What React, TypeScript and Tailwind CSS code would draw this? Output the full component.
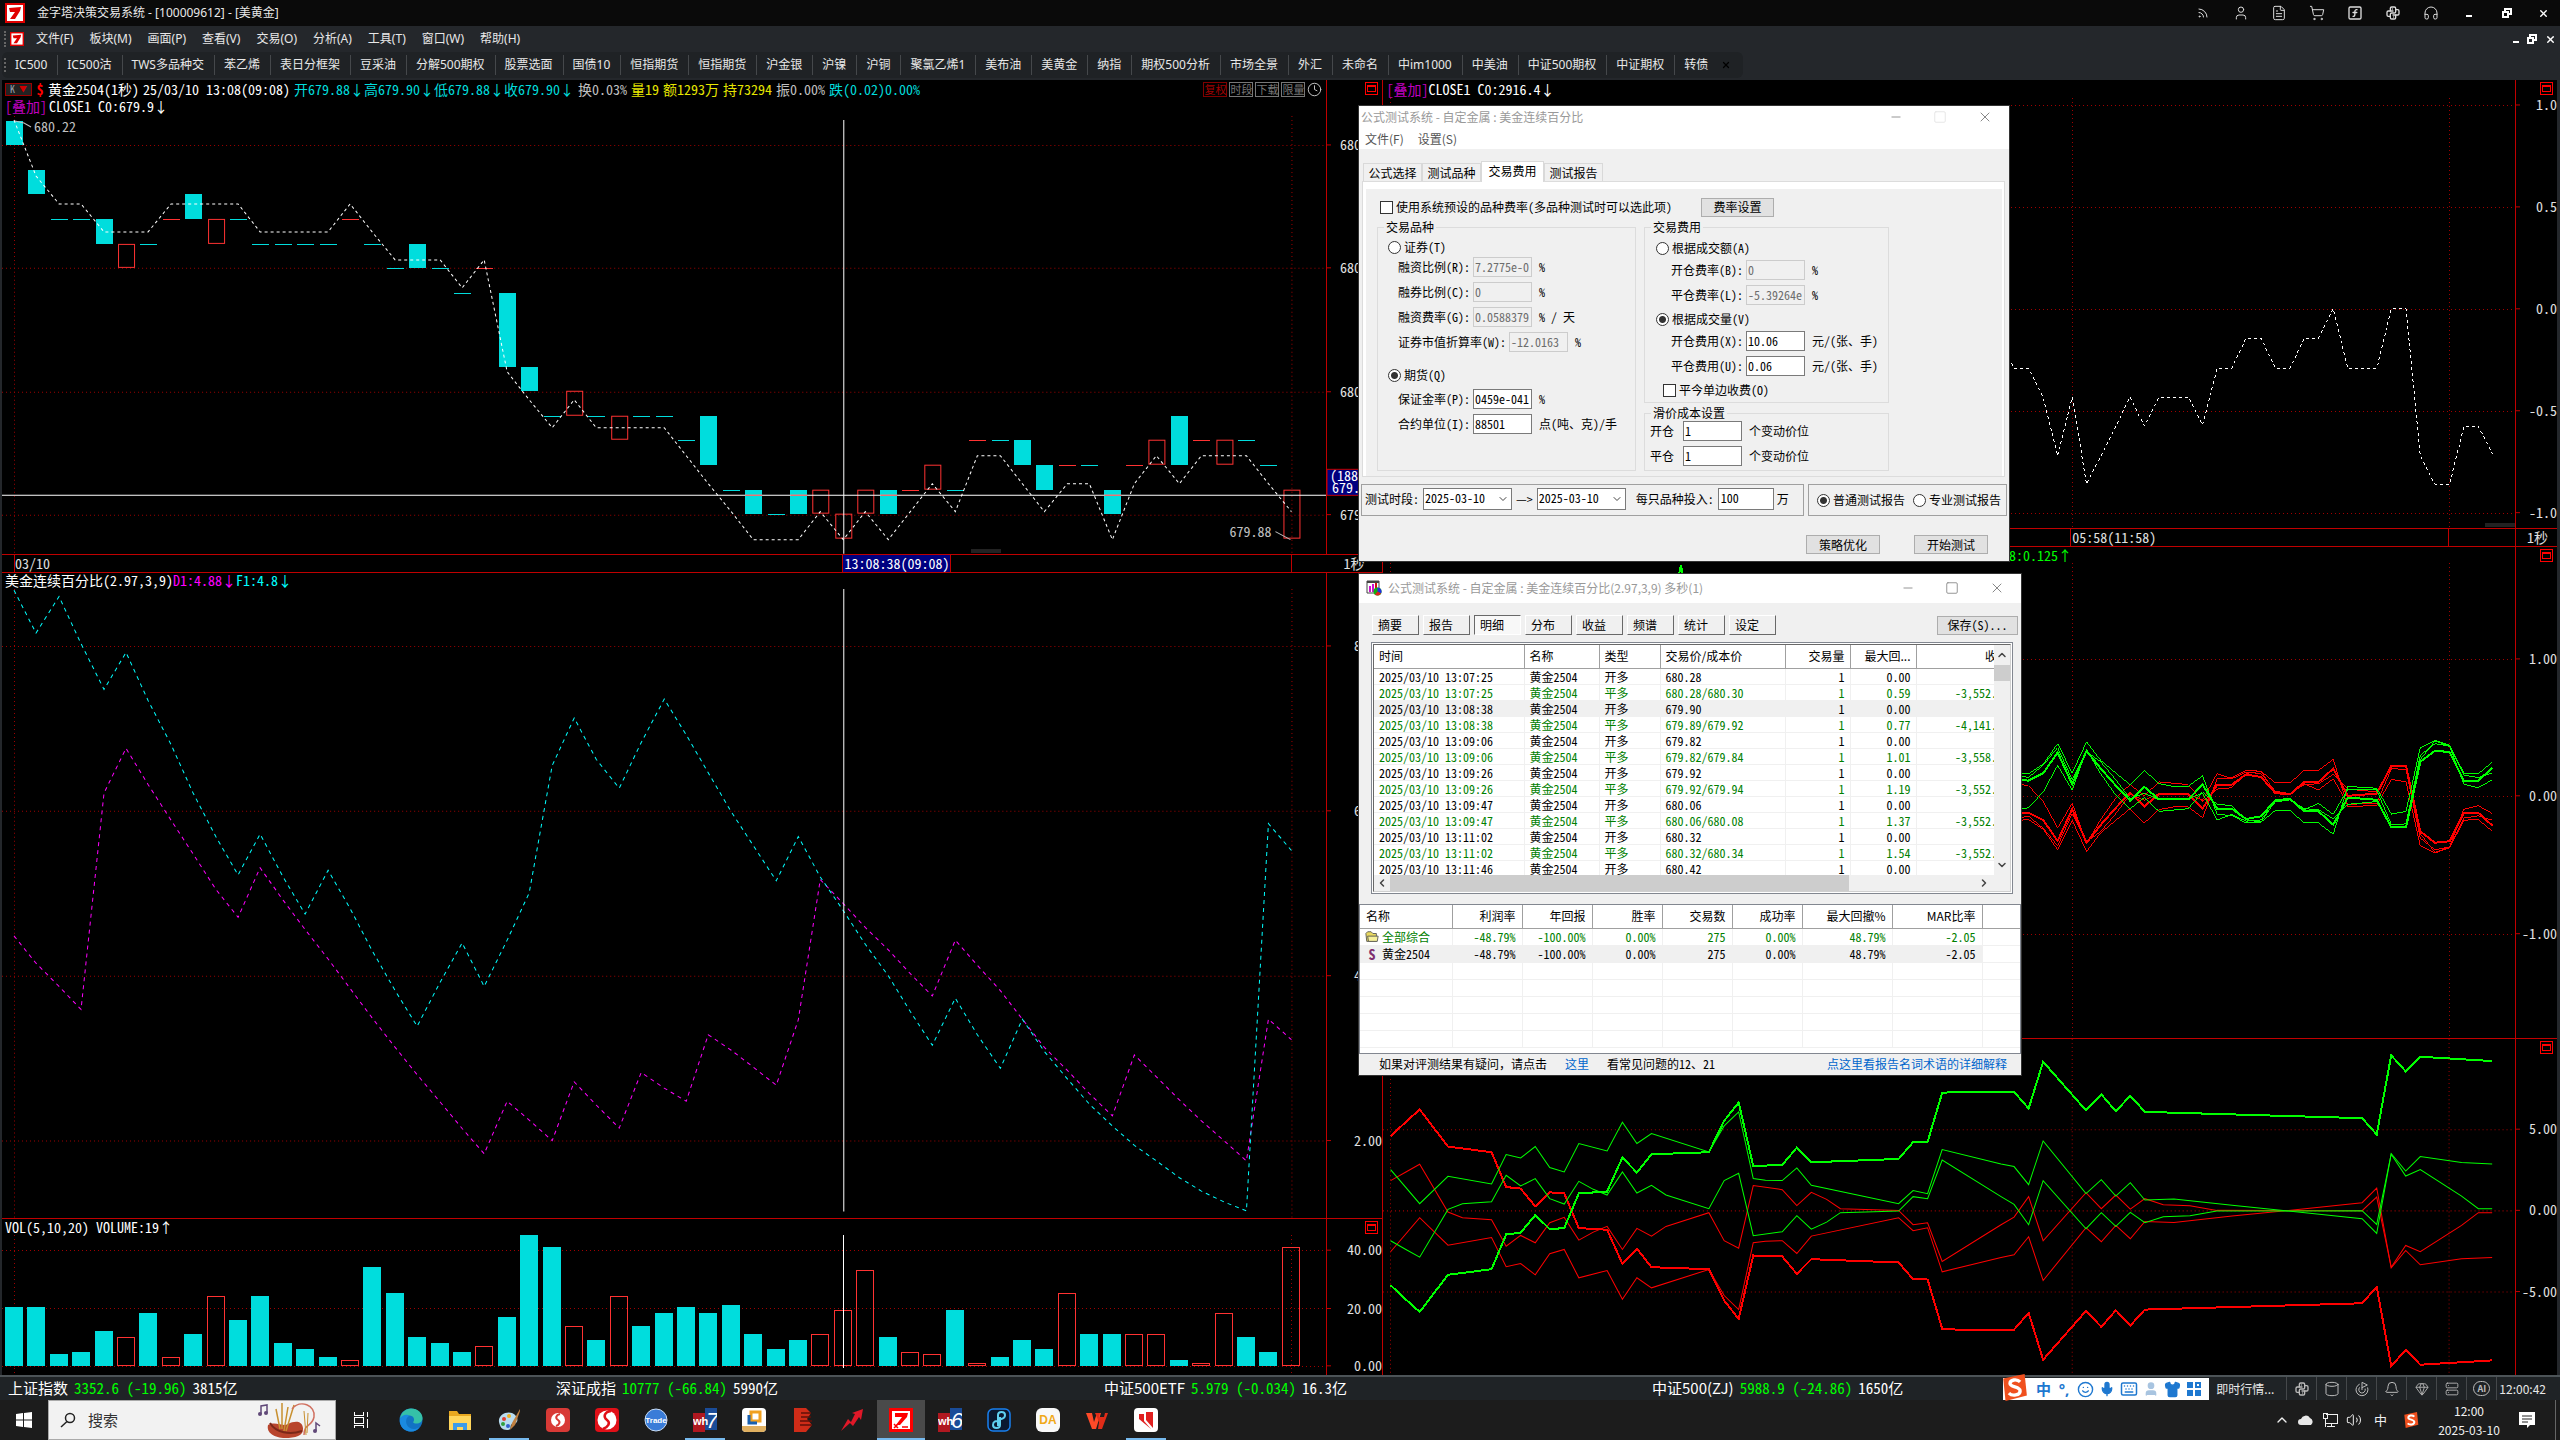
import { useState, type ReactNode } from 'react'
import {
  Bell,
  ChevronDown,
  ChevronLeft,
  ChevronRight,
  ChevronUp,
  Clock,
  Cylinder,
  FileText,
  Gem,
  Goal,
  Headphones,
  Keyboard,
  Mic,
  Minus,
  Rss,
  Server,
  Shirt,
  ShoppingCart,
  Smile,
  Square,
  SquareFunction,
  User,
  Volume2,
  X,
} from 'lucide-react'
import { TbBrandPython } from 'react-icons/tb'
import clsx from 'clsx'

const MONO = "font-['Noto_Sans_Mono_CJK_SC','Noto_Sans_CJK_SC',monospace]"
const UI = "font-['Noto_Sans_CJK_SC',sans-serif]"
const MENU = "font-['Noto_Sans','Noto_Sans_CJK_SC',sans-serif]"

const CYAN = '#00dddd'
const RED = '#ff3232'
const GRID = '#a00000'

/* ---------- data ---------- */

const menus = ['文件(F)', '板块(M)', '画面(P)', '查看(V)', '交易(O)', '分析(A)', '工具(T)', '窗口(W)', '帮助(H)']

const boards = [
  'IC500', 'IC500沽', 'TWS多品种交', '苯乙烯', '表日分框架', '豆采油', '分解500期权', '股票选面', '国债10',
  '恒指期货', '恒指期货', '沪金银', '沪镍', '沪铜', '聚氯乙烯1', '美布油', '美黄金', '纳指', '期权500分析',
  '市场全景', '外汇', '未命名', '中im1000', '中美油', '中证500期权', '中证期权', '转债',
]

// [falling?, top level, bottom level], one level = 0.02
type Candle = [boolean, number, number]
const c = (a: number, b = a): Candle => [true, a, b]
const r = (a: number, b = a): Candle => [false, a, b]
const candles: Candle[] = [
  c(0, 1), c(2, 3), c(4), c(4), c(4, 5), r(5, 6), c(5), r(4), c(3, 4), r(4, 5),
  c(4), c(5), c(5), c(5), c(5), r(4), c(5), c(6), c(5, 6), c(6),
  c(7), r(6), c(7, 10), c(10, 11), c(12), r(11, 12), c(12), r(12, 13), c(12), c(12),
  c(13), c(12, 14), c(15), c(15, 16), c(16), c(15, 16), r(15, 16), r(16, 17), r(15, 16), c(15, 16),
  r(15), r(14, 15), c(15), r(13), c(13), c(13, 14), c(14, 15), r(14), c(14), c(15, 16),
  r(14), r(13, 14), c(12, 14), r(13), r(13, 14), c(13), c(14), r(15, 17),
]

const overlay = [
  0, 2, 3, 3, 4, 4, 4, 3, 3, 3, 3, 4, 4, 4, 4, 3, 4, 5, 5, 5, 6, 5, 9, 10, 11, 10, 11, 11, 11, 11,
  12, 13, 14, 15, 15, 15, 14, 15, 14, 15, 14, 13, 14, 12, 12, 13, 14, 13, 13, 15, 13, 12, 13, 12, 12, 12, 13, 14,
]

const f1 = [
  48, 150, 63, 175, 284, 196, 310, 415, 530, 635, 725, 628, 730, 818, 714, 805, 905, 1000, 1085, 980,
  887, 990, 880, 768, 465, 352, 450, 519, 410, 307, 392, 482, 575, 655, 739, 634, 730, 810, 890, 965,
  1050, 1130, 1018, 1105, 1185, 1068, 1145, 1210, 1270, 1322, 1368, 1405, 1445, 1477, 1503, 1524, 603, 667,
]
const d1 = [
  870, 935, 990, 1045, 530, 424, 510, 595, 675, 760, 826, 708, 785, 855, 925, 995, 1065, 1135, 1200, 1265,
  1328, 1388, 1263, 1308, 1357, 1217, 1272, 1327, 1195, 1232, 1263, 1105, 1142, 1182, 1225, 1070, 736, 793, 850, 903,
  960, 1013, 880, 940, 1000, 1068, 1135, 1190, 1245, 1298, 1153, 1205, 1260, 1310, 1358, 1405, 1068, 1117,
]

// negative = rising bar
const volumes = [
  20, 20, 4, 5, 12, -10, 18, -3, 11, -24, 16, 24, 8, 6, 3, -2, 34, 25, 10, 8,
  5, -7, 17, 45, 41, -14, 9, -24, 14, 18, 20, 18, 21, 11, 6, 9, -11, -19, -33, 10,
  -5, -4, 19, -1, 3, 9, 6, -25, 11, 11, -11, -11, 2, -1, -18, 10, 5, -41,
]

const closeLine =
  '25,130 40,153 80,153 122,220 162,350 203,218 243,413 283,350 325,283 365,218 405,283 446,218 528,218 568,281 609,153 650,153 690,86 732,86 772,153 813,153 853,86 893,86 934,20 975,153 1056,153 1097,20 1138,20 1178,350 1219,414 1260,414 1300,283 1340,283 1380,345'

const band = {
  main: '40,1073 60,1075 80,1077 122,1060 162,1014 203,1085 243,1010 283,1050 325,1088 365,1122 405,1091 446,1119 528,1119 568,1086 609,1140 650,1140 690,1163 732,1157 772,1121 813,1118 853,1146 893,1146 934,1176 975,1115 1056,1120 1097,1182 1138,1182 1178,1035 1219,1010 1260,1013 1300,1077 1340,1077 1380,1048',
  thin: [
    '60,1060 80,1062 122,1040 162,994 203,1060 243,990 283,1032 325,1060 365,1086 405,1054 446,1084 487,1090 528,1090 568,1066 609,1153 650,1155 690,1172 732,1170 772,1144 813,1144 853,1172 893,1172 934,1197 975,1090 1056,1094 1097,1152 1138,1146 1178,1003 1219,987 1260,998 1300,1060 1340,1062 1380,1035',
    '60,1066 80,1070 122,1042 162,1003 203,1075 243,1012 283,1035 325,1075 365,1118 405,1105 446,1120 528,1118 568,1105 609,1165 650,1153 690,1168 732,1165 772,1125 813,1120 853,1142 893,1128 934,1153 975,1096 1056,1098 1097,1176 1138,1174 1178,1020 1219,994 1260,1000 1300,1065 1340,1070 1380,1060',
    '60,1140 80,1138 122,1102 162,1043 203,1098 243,1008 283,1062 325,1110 365,1140 405,1115 446,1146 528,1140 568,1102 609,1130 650,1133 690,1165 732,1170 772,1122 813,1120 853,1140 893,1142 934,1163 975,1130 1056,1124 1097,1182 1138,1182 1178,1030 1219,988 1260,1000 1300,1085 1340,1093 1380,1075',
  ],
}

const spread = {
  main: '40,737 60,780 78,817 115,706 172,689 191,585 210,580 229,527 248,569 267,566 286,462 323,457 343,355 362,400 381,345 456,339 476,245 495,190 514,380 552,377 571,325 590,369 704,359 723,309 742,308 761,161 780,158 855,158 874,208 893,68 949,214 969,166 988,216 1007,170 1026,218 1310,237 1329,286 1348,49 1367,97 1386,53 1480,66',
  thin: [
    '40,391 78,493 115,411 172,434 191,346 210,356 229,322 248,385 267,398 286,313 323,335 343,249 362,313 381,283 456,338 476,260 495,218 514,418 530,423 552,424 571,386 590,438 704,493 723,454 742,463 761,331 838,374 855,382 874,436 893,305 949,463 969,421 988,470 1007,430 1026,482 1064,479 1140,498 1210,514 1310,538 1329,582 1348,343 1367,395 1386,352 1440,370 1480,374',
    '40,604 60,630 78,653 115,510 134,493 172,487 191,408 210,440 229,418 248,478 267,494 286,426 305,450 323,467 343,398 362,461 381,438 400,467 456,508 476,424 495,402 514,589 552,577 571,529 590,569 610,548 628,520 704,515 723,472 742,478 761,362 838,472 855,495 874,556 893,424 949,568 969,520 988,561 1007,519 1026,550 1050,532 1085,529 1120,515 1310,514 1329,555 1348,345 1367,410 1386,391 1440,470 1462,508 1480,508',
  ],
}

const trades = [
  ['13:07:25', '680.28', '0.00', ''],
  ['13:07:25', '680.28/680.30', '0.59', '-3,552.00'],
  ['13:08:38', '679.90', '0.00', ''],
  ['13:08:38', '679.89/679.92', '0.77', '-4,141.00'],
  ['13:09:06', '679.82', '0.00', ''],
  ['13:09:06', '679.82/679.84', '1.01', '-3,558.00'],
  ['13:09:26', '679.92', '0.00', ''],
  ['13:09:26', '679.92/679.94', '1.19', '-3,552.00'],
  ['13:09:47', '680.06', '0.00', ''],
  ['13:09:47', '680.06/680.08', '1.37', '-3,552.00'],
  ['13:11:02', '680.32', '0.00', ''],
  ['13:11:02', '680.32/680.34', '1.54', '-3,552.00'],
  ['13:11:46', '680.42', '0.00', ''],
]

const summaryHead = ['名称', '利润率', '年回报', '胜率', '交易数', '成功率', '最大回撤%', 'MAR比率', '']
const summaryRow = ['-48.79%', '-100.00%', '0.00%', '275', '0.00%', '48.79%', '-2.05', '']

const quotes = [
  ['上证指数', '3352.6 (-19.96)', '3815亿'],
  ['深证成指', '10777 (-66.84)', '5990亿'],
  ['中证500ETF', '5.979 (-0.034)', '16.3亿'],
  ['中证500(ZJ)', '5988.9 (-24.86)', '1650亿'],
]

/* ---------- chart helpers ---------- */

const barX = (i: number) => Math.round(14 + i * 22.4)
const levelY = (n: number) => Math.round(120.5 + n * 24.6)

const series = (ys: number[], toY: (v: number) => number) => ys.map((v, i) => `${barX(i)},${toY(v).toFixed(1)}`).join(' ')

const project = (src: string, toX: (v: number) => number, toY: (v: number) => number) =>
  src
    .split(' ')
    .map((p) => {
      const [x, y] = p.split(',').map(Number)
      return `${toX(x).toFixed(1)},${toY(y).toFixed(1)}`
    })
    .join(' ')

interface PlotProps {
  x: number
  y: number
  w: number
  h: number
  rows: number[]
  cols: number[]
  children?: ReactNode
}

function Plot({ x, y, w, h, rows, cols, children }: PlotProps) {
  return (
    <svg viewBox={`${x} ${y} ${w} ${h}`} preserveAspectRatio="none" className="block min-h-0 w-full flex-1" shapeRendering="crispEdges">
      <g stroke={GRID} strokeDasharray="1 3">
        {rows.map((gy) => (
          <line key={gy} x1={x} x2={x + w} y1={gy + 0.5} y2={gy + 0.5} />
        ))}
        {cols.map((gx) => (
          <line key={gx} x1={gx + 0.5} x2={gx + 0.5} y1={y} y2={y + h} />
        ))}
      </g>
      {children}
    </svg>
  )
}

interface AxisProps {
  top: number
  height: number
  labels: [number, string][]
  narrow?: boolean
  children?: ReactNode
}

function Axis({ top, height, labels, narrow, children }: AxisProps) {
  const pct = (y: number) => `${((y - top) / height) * 100}%`
  return (
    <div className={clsx('relative shrink-0 border-l border-[#c00000]', narrow ? 'w-[42px]' : 'w-14')}>
      <svg className={clsx('absolute inset-0 h-full w-full overflow-visible text-[14px]', MONO)}>
        {labels.map(([y, text]) => (
          <g key={y}>
            <line x1="0" x2="4" y1={pct(y)} y2={pct(y)} stroke="#c00000" />
            <text x="100%" y={pct(y)} dy="5" textAnchor="end" fill="#e0e0e0">
              {text}
            </text>
          </g>
        ))}
        {children}
      </svg>
      <button aria-label="最大化" className="absolute top-[2px] right-1 flex h-[13px] w-[13px] items-center justify-center border border-[#ff0000]">
        <span className="h-[7px] w-[9px] border border-t-2 border-[#ff0000]" />
      </button>
    </div>
  )
}

function TimeRow({ children }: { children: ReactNode }) {
  return <div className={clsx('flex h-[19px] shrink-0 items-stretch border-y border-[#c00000] text-[14px] leading-[17px] text-[#e0e0e0]', MONO)}>{children}</div>
}

/* ---------- charts ---------- */

function CandlePanel() {
  return (
    <div className="flex min-h-0 flex-[474]">
      <div className="flex min-w-0 flex-1 flex-col">
        <div className={clsx('flex h-[18px] items-center gap-1 pl-[3px] text-[14px] leading-[18px] whitespace-nowrap text-white', MONO)}>
          <button className="flex h-[13px] items-center border border-[#a00000] bg-[#222] px-1 text-[10px] text-gray-400">
            K<span className="ml-1 text-[8px] text-[#d00000]">▼</span>
          </button>
          <span className="w-2 text-center font-bold text-[#ff0000]">$</span>
          <span>黄金2504(1秒)</span>
          <span>25/03/10 13:08(09:08)</span>
          <span className="text-[#00dddd]">开679.88↓高679.90↓低679.88↓收679.90↓</span>
          <span className="text-[#c0c0c0]">换0.03%</span>
          <span className="text-[#e6e600]">量19</span>
          <span className="text-[#e6e600]">额1293万</span>
          <span className="text-[#e6e600]">持73294</span>
          <span className="text-[#c0c0c0]">振0.00%</span>
          <span className="text-[#00dddd]">跌(0.02)0.00%</span>
          <div className="mr-1 ml-auto flex items-center gap-[2px] text-[11px] leading-[13px] text-[#777]">
            <button className="h-[15px] w-6 border border-[#800000] text-center text-[#a00000]">复权</button>
            <button className="h-[15px] w-6 border border-[#777] text-center">时段</button>
            <button className="h-[15px] w-6 border border-[#777] text-center">下载</button>
            <button className="h-[15px] w-6 border border-[#777] text-center">限量</button>
            <Clock className="h-[15px] w-[15px] text-[#ccc]" strokeWidth={1.5} />
          </div>
        </div>
        <div className={clsx('flex h-[18px] gap-[2px] pl-[3px] text-[14px] leading-[16px] text-white', MONO)}>
          <span className="text-[#c000c0]">[叠加]</span>
          <span>CLOSE1 C0:679.9↓</span>
        </div>
        <Plot x={2} y={116} w={1324} h={438} rows={[145, 268, 392, 515]} cols={[14, 1291]}>
          {candles.map(([fall, a, b], i) => {
            const x = barX(i) - 8
            const color = fall ? CYAN : RED
            if (a === b) return <rect key={i} x={x} y={levelY(a)} width="17" height="1" fill={color} />
            return fall ? (
              <rect key={i} x={x} y={levelY(a)} width="17" height={levelY(b) - levelY(a)} fill={color} />
            ) : (
              <rect key={i} x={x + 0.5} y={levelY(a) + 0.5} width="16" height={levelY(b) - levelY(a) - 1} fill="none" stroke={color} />
            )
          })}
          <polyline points={series(overlay, (v) => 120 + v * 28)} fill="none" stroke="#fff" strokeDasharray="3 3" />
          <line x1="2" x2="1326" y1="495.5" y2="495.5" stroke="#fff" />
          {[33, 35, 39, 49].map((i) => (
            <line key={i} x1={barX(i) - 8} x2={barX(i) + 9} y1="495.5" y2="495.5" stroke={RED} />
          ))}
          <line x1="843.5" x2="843.5" y1="120" y2="554" stroke="#fff" />
          <path d="M15 121 L24 123 L31 127 M1275 532 L1290 540" stroke="#c0c0c0" fill="none" />
          <g className={clsx('text-[14px]', MONO)} fill="#c0c0c0">
            <text x="34" y="132">680.22</text>
            <text x="1229" y="537">679.88</text>
          </g>
          <rect x="971" y="549" width="30" height="4" fill="#222" />
        </Plot>
      </div>
      <Axis
        top={80}
        height={474}
        labels={[
          [145, '680.20'],
          [268, '680.10'],
          [392, '680.00'],
          [515, '679.90'],
        ]}
      >
        <rect x="0" y="82.2%" width="100%" height="26" fill="#000080" stroke="#c00000" />
        <text x="3" y="84.6%" fill="#fff">(188)</text>
        <text x="5" y="87.3%" fill="#fff">679.92</text>
      </Axis>
    </div>
  )
}

function IndicatorPanel() {
  const toY = (v: number) => 570 + v / 2.376
  return (
    <div className="flex min-h-0 flex-[646]">
      <div className="flex min-w-0 flex-1 flex-col">
        <div className={clsx('flex h-4 pl-[3px] text-[14px] leading-[14px] text-white', MONO)}>
          <span>美金连续百分比(2.97,3,9)</span>
          <span className="text-[#ff00ff]">D1:4.88↓</span>
          <span className="text-[#00ffff]">F1:4.8↓</span>
        </div>
        <Plot x={2} y={589} w={1324} h={630} rows={[646, 811, 976, 1141]} cols={[14, 1291]}>
          <polyline points={series(d1, toY)} fill="none" stroke="#ff00ff" strokeDasharray="4 4" />
          <polyline points={series(f1, toY)} fill="none" stroke="#00ffff" strokeDasharray="4 4" />
          <line x1="843.5" x2="843.5" y1="589" y2="1212" stroke="#fff" />
        </Plot>
      </div>
      <Axis
        top={573}
        height={646}
        labels={[
          [646, '8.00'],
          [811, '6.00'],
          [976, '4.00'],
          [1141, '2.00'],
        ]}
      />
    </div>
  )
}

function VolumePanel() {
  return (
    <div className="flex min-h-0 flex-[156] border-t border-[#c00000]">
      <div className="flex min-w-0 flex-1 flex-col">
        <div className={clsx('h-4 pl-[3px] text-[14px] leading-4 text-white', MONO)}>VOL(5,10,20) VOLUME:19↑</div>
        <Plot x={2} y={1236} w={1324} h={139} rows={[1251, 1309, 1366]} cols={[14, 1291]}>
          {volumes.map((v, i) => {
            const h = Math.max(1, Math.round(Math.abs(v) * 2.88))
            const x = barX(i) - 9
            return v > 0 ? (
              <rect key={i} x={x} y={1366 - h} width="18" height={h} fill={CYAN} />
            ) : (
              <rect key={i} x={x + 0.5} y={1366.5 - h} width="17" height={h - 1} fill="none" stroke={RED} />
            )
          })}
          <line x1="843.5" x2="843.5" y1="1236" y2="1368" stroke="#fff" />
        </Plot>
      </div>
      <Axis
        top={1220}
        height={155}
        labels={[
          [1251, '40.00'],
          [1309, '20.00'],
          [1366, '0.00'],
        ]}
      />
    </div>
  )
}

interface MirrorProps {
  data: { main: string; thin: string[] }
  toX: (v: number) => number
  toY: (v: number) => number
  mirror: number
}

// every green line has a red twin reflected on the zero axis
function MirrorLines({ data, toX, toY, mirror }: MirrorProps) {
  return (
    <g fill="none">
      {[true, false].map((flip) => {
        const y = (v: number) => toY(flip ? mirror - v : v)
        return (
          <g key={String(flip)} stroke={flip ? '#ff0000' : '#00ff00'}>
            {data.thin.map((t) => (
              <polyline key={t} points={project(t, toX, y)} strokeWidth="1" />
            ))}
            <polyline points={project(data.main, toX, y)} strokeWidth="2" />
          </g>
        )
      })}
    </g>
  )
}

function RightCharts() {
  const toX = (v: number) => 2000 + v / 2.8
  const toY = (v: number) => 300 + v / 2.24
  return (
    <div className="flex min-w-0 flex-[1174] flex-col">
      <div className="flex min-h-0 flex-[448]">
        <div className="flex min-w-0 flex-1 flex-col">
          <div className={clsx('flex h-[18px] pl-[3px] text-[14px] leading-[18px] text-white', MONO)}>
            <span className="text-[#c000c0]">[叠加]</span>
            <span>CLOSE1 C0:2916.4↓</span>
          </div>
          <Plot x={1383} y={98} w={1132} h={430} rows={[105, 207, 309, 411, 513]} cols={[1390, 2072, 2449]}>
            <polyline points={project(closeLine, toX, toY)} fill="none" stroke="#fff" strokeDasharray="3 3" />
            <rect x="2485" y="523" width="30" height="4" fill="#222" />
          </Plot>
        </div>
        <Axis
          narrow
          top={80}
          height={448}
          labels={[
            [105, '1.0'],
            [207, '0.5'],
            [309, '0.0'],
            [411, '-0.5'],
            [513, '-1.0'],
          ]}
        />
      </div>
      <TimeRow>
        <div className="flex-[689]" />
        <div className="flex-[377] border-l border-[#c00000] pl-px">05:58(11:58)</div>
        <div className="flex-[66] border-l border-[#c00000]" />
        <div className="w-[42px] border-l border-[#c00000] pl-[11px]">1秒</div>
      </TimeRow>
      <div className="flex min-h-0 flex-[492]">
        <div className="flex min-w-0 flex-1 flex-col">
          <div className={clsx('h-4 pr-[443px] text-right text-[14px] leading-4 text-[#00ff00]', MONO)}>D8:0.125↑</div>
          <Plot x={1383} y={563} w={1132} h={476} rows={[659, 796, 934]} cols={[1390, 2072, 2449]}>
            <path d="M1674 600 L1681 565 L1688 600" stroke="#00ff00" strokeWidth="2" fill="none" />
            <MirrorLines data={band} toX={toX} toY={toY} mirror={2226} />
          </Plot>
        </div>
        <Axis
          narrow
          top={547}
          height={492}
          labels={[
            [659, '1.00'],
            [796, '0.00'],
            [934, '-1.00'],
          ]}
        />
      </div>
      <div className="flex min-h-0 flex-[336] border-t border-[#c00000]">
        <div className="flex min-w-0 flex-1 flex-col">
          <Plot x={1383} y={1040} w={1132} h={335} rows={[1130, 1211, 1292]} cols={[1390, 2072, 2449]}>
            <MirrorLines data={spread} toX={(v) => 1360 + v / 1.3067} toY={(v) => 1040 + v / 3} mirror={1028} />
          </Plot>
        </div>
        <Axis
          narrow
          top={1040}
          height={335}
          labels={[
            [1130, '5.00'],
            [1211, '0.00'],
            [1292, '-5.00'],
          ]}
        />
      </div>
    </div>
  )
}

/* ---------- dialog controls ---------- */

interface FieldProps {
  id: string
  label: string
  value: string
  unit?: string
  disabled?: boolean
}

function Field({ id, label, value, unit, disabled }: FieldProps) {
  return (
    <div className="flex h-5 items-center whitespace-nowrap">
      <label htmlFor={id} className="mr-[3px] whitespace-pre">
        {label}
      </label>
      <input
        id={id}
        defaultValue={value}
        disabled={disabled}
        className={clsx(
          'h-5 w-[59px] border px-px pb-[2px]',
          disabled ? 'border-[#cccccc] bg-[#f0f0f0] text-[#6d6d6d]' : 'border-[#7a7a7a] bg-white',
        )}
      />
      <span className="ml-[7px] whitespace-pre">{unit}</span>
    </div>
  )
}

interface ChoiceProps {
  type: 'radio' | 'checkbox'
  name?: string
  label: string
  checked?: boolean
}

function Choice({ type, name, label, checked }: ChoiceProps) {
  return (
    <label className="flex h-4 items-center gap-[3px] whitespace-nowrap">
      <input
        type={type}
        name={name}
        defaultChecked={checked}
        className={clsx(
          'h-[13px] w-[13px] shrink-0 appearance-none border border-[#333] bg-white',
          type === 'radio' ? 'rounded-full checked:bg-[radial-gradient(circle,#333_0_3px,#fff_4px)]' : 'checked:bg-[#333]',
        )}
      />
      {label}
    </label>
  )
}

function DateSelect({ label }: { label: string }) {
  return (
    <span className="relative">
      <select aria-label={label} className="h-[22px] w-[89px] appearance-none border border-[#7a7a7a] bg-white pb-[2px] pl-px">
        <option>2025-03-10</option>
      </select>
      <ChevronDown className="pointer-events-none absolute top-[4px] right-[3px] h-3 w-3 text-[#444]" />
    </span>
  )
}

function PushButton({ children, className }: { children: ReactNode; className?: string }) {
  return <button className={clsx('h-[19px] border border-[#adadad] bg-[#e1e1e1] text-center leading-[16px]', className)}>{children}</button>
}

function WindowButtons({ dimMax }: { dimMax?: boolean }) {
  return (
    <div className="ml-auto flex items-center gap-[30px] pr-4 text-[#888]">
      <button aria-label="最小化"><Minus className="h-[14px] w-[14px]" strokeWidth={1.5} /></button>
      <button aria-label="最大化" className={dimMax ? 'text-[#e4e4e4]' : ''}><Square className="h-[14px] w-[14px]" strokeWidth={1.5} /></button>
      <button aria-label="关闭"><X className="h-4 w-4" strokeWidth={1.5} /></button>
    </div>
  )
}

function Group({ title, children, className }: { title: string; children: ReactNode; className?: string }) {
  return (
    <fieldset className={clsx('relative border border-[#dcdcdc]', className)}>
      <legend className="absolute -top-[8px] left-[6px] bg-[#f0f0f0] px-[2px] leading-[14px]">{title}</legend>
      {children}
    </fieldset>
  )
}

function SettingsDialog() {
  const [tab, setTab] = useState('交易费用')
  return (
    <section className={clsx('absolute top-[105px] left-[1358px] w-[652px] border border-[#333] bg-[#f0f0f0] text-xs leading-4 text-black', MONO)}>
      <div className={clsx('h-[43px] bg-white', UI)}>
        <div className="flex h-[25px] items-center pb-[3px] pl-[2px] text-[#999]">
          公式测试系统 - 自定金属 : 美金连续百分比
          <WindowButtons dimMax />
        </div>
        <div className="flex gap-[14px] pl-[6px] text-[#555]">
          <button>文件(F)</button>
          <button>设置(S)</button>
        </div>
      </div>
      <div className="mt-3 flex h-5 items-end pl-1">
        {['公式选择', '测试品种', '交易费用', '测试报告'].map((t) => (
          <button
            key={t}
            onClick={() => setTab(t)}
            className={clsx(
              'border border-b-0 border-[#d9d9d9]',
              t === tab ? 'relative top-px h-[21px] w-[63px] bg-white pb-[2px]' : 'h-[18px] w-[59px] bg-[#f0f0f0]',
            )}
          >
            {t}
          </button>
        ))}
      </div>
      <div className="mr-1 ml-[3px] border border-[#dcdcdc] bg-white pt-[7px] pr-[2px] pb-0 pl-[3px]">
        <div className="h-[287px] bg-[#f0f0f0] pt-2 pl-[11px]">
          <div className="flex h-5 items-center pl-[3px]">
            <Choice type="checkbox" label="使用系统预设的品种费率(多品种测试时可以选此项)" />
            <PushButton className="ml-[29px] w-[73px]">费率设置</PushButton>
          </div>
          <div className="mt-[10px] flex items-stretch gap-2">
            <Group title="交易品种" className="h-[244px] w-[259px] pt-[11px] pl-[10px]">
              <Choice type="radio" name="kind" label="证券(T)" />
              <div className="mt-[2px] flex flex-col gap-[5px] pl-[10px]">
                <Field id="rz" label="融资比例(R):" value="7.2775e-0" unit="%" disabled />
                <Field id="rq" label="融券比例(C):" value="0" unit="%" disabled />
                <Field id="rf" label="融资费率(G):" value="0.0588379" unit="% / 天" disabled />
                <Field id="zs" label="证券市值折算率(W):" value="-12.0163" unit="%" disabled />
              </div>
              <div className="mt-[15px]">
                <Choice type="radio" name="kind" label="期货(Q)" checked />
              </div>
              <div className="mt-[6px] flex flex-col gap-[5px] pl-[10px]">
                <Field id="bz" label="保证金率(P):" value="0459e-041" unit="%" />
                <Field id="hy" label="合约单位(I):" value="88501" unit="点(吨、克)/手" />
              </div>
            </Group>
            <div className="flex w-[245px] flex-col gap-[10px]">
              <Group title="交易费用" className="h-[176px] pt-3 pl-[11px]">
                <Choice type="radio" name="fee" label="根据成交额(A)" />
                <div className="mt-1 flex flex-col gap-[5px] pl-[15px]">
                  <Field id="kf" label="开仓费率(B):" value="0" unit="%" disabled />
                  <Field id="pf" label="平仓费率(L):" value="-5.39264e" unit="%" disabled />
                </div>
                <div className="mt-[6px]">
                  <Choice type="radio" name="fee" label="根据成交量(V)" checked />
                </div>
                <div className="mt-1 flex flex-col gap-[5px] pl-[15px]">
                  <Field id="kx" label="开仓费用(X):" value="10.06" unit="元/(张、手)" />
                  <Field id="px" label="平仓费用(U):" value="0.06" unit="元/(张、手)" />
                </div>
                <div className="mt-[6px] pl-[7px]">
                  <Choice type="checkbox" label="平今单边收费(O)" />
                </div>
              </Group>
              <Group title="滑价成本设置" className="flex h-[58px] flex-col gap-[5px] pt-[7px] pl-[5px]">
                <Field id="k1" label="开仓 " value="1" unit="个变动价位" />
                <Field id="p1" label="平仓 " value="1" unit="个变动价位" />
              </Group>
            </div>
          </div>
        </div>
      </div>
      <div className="mt-[7px] flex gap-1 px-[2px]">
        <div className="flex h-8 w-[443px] items-center border border-[#a0a0a0] pb-[2px] pl-[3px] whitespace-nowrap">
          测试时段:
          <span className="mr-1 ml-1"><DateSelect label="开始日期" /></span>
          —&gt;
          <span className="mr-[10px] ml-1"><DateSelect label="结束日期" /></span>
          <label htmlFor="capital">每只品种投入:</label>
          <input id="capital" defaultValue="100" className="mr-[3px] ml-1 h-[22px] w-[56px] border border-[#7a7a7a] bg-white px-[2px] pb-1" />
          万
        </div>
        <div className="flex h-8 flex-1 items-center gap-2 border border-[#a0a0a0] pl-2">
          <Choice type="radio" name="report" label="普通测试报告" checked />
          <Choice type="radio" name="report" label="专业测试报告" />
        </div>
      </div>
      <div className="mt-[19px] mb-[7px] flex justify-end gap-[34px] pr-[21px]">
        <PushButton className="w-[74px]">策略优化</PushButton>
        <PushButton className="w-[74px]">开始测试</PushButton>
      </div>
    </section>
  )
}

function ReportDialog() {
  const [tab, setTab] = useState('明细')
  return (
    <section className={clsx('absolute top-[573px] left-[1358px] w-[664px] border border-[#333] bg-[#f0f0f0] text-xs leading-4 text-black', MONO)}>
      <div className={clsx('flex h-[29px] items-center bg-white pb-[2px] pl-[7px] text-[#999]', UI)}>
        <svg viewBox="0 0 16 16" className="mr-[6px] h-4 w-4">
          <path d="M1 1h12v12H1z" fill="#fff" stroke="#444" />
          <path d="M1 2h12" stroke="#444" strokeWidth="2" />
          <path d="M4 12V6M7 12V4" stroke="#d010d0" strokeWidth="2" />
          <path d="M10 9V3" stroke="#d01010" strokeWidth="2" />
          <circle cx="11.5" cy="11.5" r="4" fill="#10b010" />
          <path d="M11.500 11.500V7.500A4 4 0 0 1 15 13.500z" fill="#2030e0" />
          <path d="M11.500 11.500L15 13.500A4 4 0 0 1 9 14.500z" fill="#e02020" />
        </svg>
        公式测试系统 - 自定金属 : 美金连续百分比(2.97,3,9) 多秒(1)
        <WindowButtons />
      </div>
      <div className="mt-3 flex items-center gap-1 pr-[3px] pl-[13px]">
        {['摘要', '报告', '明细', '分布', '收益', '频谱', '统计', '设定'].map((t) => (
          <button
            key={t}
            onClick={() => setTab(t)}
            className={clsx(
              'h-5 w-[47px] border pl-[5px] text-left leading-[18px]',
              t === tab ? 'border-t-[#696969] border-r-white border-b-white border-l-[#696969] bg-[#f8f8f8]' : 'border-t-white border-r-[#696969] border-b-[#696969] border-l-white',
            )}
          >
            {t}
          </button>
        ))}
        <PushButton className="ml-auto w-[81px]">保存(S)...</PushButton>
      </div>
      <div className="mt-[7px] mr-2 ml-3 border border-[#828790] bg-white p-px">
        <div className="border border-[#d0d0d0] border-t-[#696969] border-l-[#696969]">
          <div className="flex h-[230px]">
            <div className="min-w-0 flex-1 overflow-hidden">
              <table className="w-[641px] table-fixed border-collapse">
                <colgroup>
                  <col className="w-[150px]" />
                  <col className="w-[75px]" />
                  <col className="w-[61px]" />
                  <col className="w-[125px]" />
                  <col className="w-[65px]" />
                  <col className="w-[66px]" />
                  <col />
                </colgroup>
                <thead className={UI}>
                  <tr className="h-[23px] border-b border-[#a0a0a0]">
                    {['时间', '名称', '类型', '交易价/成本价', '交易量', '最大回...', '收益'].map((h, i) => (
                      <th key={h} className={clsx('border-r border-[#a0a0a0] px-[5px] font-normal', i > 3 ? 'text-right' : 'text-left')}>
                        {h}
                      </th>
                    ))}
                  </tr>
                </thead>
                <tbody>
                  {trades.map(([time, price, draw, gain], i) => (
                    <tr key={i} className={clsx('h-4 border-b border-[#f0f0f0] leading-[15px]', i % 2 && 'text-[#008000]', i === 2 && 'bg-[#f0f0f0]')}>
                      {[`2025/03/10 ${time}`, '黄金2504', i % 2 ? '平多' : '开多', price, '1', draw, gain].map((v, k) => (
                        <td key={k} className={clsx('border-r border-[#f0f0f0] px-[5px] py-0 whitespace-nowrap', k > 3 && 'text-right')}>
                          {v}
                        </td>
                      ))}
                    </tr>
                  ))}
                </tbody>
              </table>
            </div>
            <div className="flex w-4 flex-col items-center bg-[#f0f0f0] py-[3px]">
              <ChevronUp className="h-[14px] w-3 text-[#444]" strokeWidth={3} />
              <div className="mt-[3px] h-4 w-4 bg-[#cdcdcd]" />
              <ChevronDown className="mt-auto h-[14px] w-3 text-[#444]" strokeWidth={3} />
            </div>
          </div>
          <div className="flex h-4 items-center bg-[#f0f0f0] pr-[18px]">
            <ChevronLeft className="h-3 w-4 text-[#444]" strokeWidth={3} />
            <div className="h-4 w-[459px] bg-[#cdcdcd]" />
            <ChevronRight className="ml-auto h-3 w-4 text-[#444]" strokeWidth={3} />
          </div>
        </div>
      </div>
      <div className="mt-[10px] h-[150px] overflow-hidden border border-[#828790] bg-white">
        <table className="w-full table-fixed border-collapse">
          <colgroup>
            <col className="w-[92px]" />
            <col className="w-[70px]" />
            <col className="w-[70px]" />
            <col className="w-[70px]" />
            <col className="w-[70px]" />
            <col className="w-[70px]" />
            <col className="w-[90px]" />
            <col className="w-[90px]" />
            <col />
          </colgroup>
          <thead className={UI}>
            <tr className="h-[23px] border-b border-[#a0a0a0]">
              {summaryHead.map((h, i) => (
                <th key={h} className={clsx('px-[6px] font-normal', i ? 'text-right' : 'text-left', i < 8 && 'border-r border-[#a0a0a0]')}>
                  {h}
                </th>
              ))}
            </tr>
          </thead>
          <tbody>
            {[0, 1, 2, 3, 4, 5, 6].map((n) => (
              <tr key={n} className={clsx('h-[17px] border-b border-[#f0f0f0]', n === 0 && 'text-[#008000]')}>
                <td className={clsx('border-r border-[#f0f0f0] p-0 pl-1', n === 1 && 'bg-[#f0f0f0]')}>
                  {n < 2 && (
                    <span className="flex items-center gap-[2px]">
                      {n === 0 ? (
                        <svg viewBox="0 0 16 16" className="h-[14px] w-4">
                          <path d="M1 4l2-2h4l2 2h4v9H2z" fill="#e8d860" stroke="#555" />
                          <path d="M3 7h12l-1 6H4z" fill="#f6f09a" stroke="#555" />
                        </svg>
                      ) : (
                        <b className="w-4 text-center text-sm leading-4 text-[#803070]">S</b>
                      )}
                      {n === 0 ? '全部综合' : '黄金2504'}
                    </span>
                  )}
                </td>
                {summaryRow.map((v, i) => (
                  <td key={i} className={clsx('p-0 pr-[6px] text-right', i < 7 && 'border-r border-[#f0f0f0]', n === 1 && i < 7 && 'bg-[#f0f0f0]')}>
                    {n < 2 ? v : ''}
                  </td>
                ))}
              </tr>
            ))}
          </tbody>
        </table>
      </div>
      <div className="flex h-[21px] items-center pr-[14px] pb-[2px] pl-5">
        如果对评测结果有疑问，请点击
        <a href="#faq" className="mx-[18px] text-[#0066cc]">这里</a>
        看常见问题的12、21
        <a href="#terms" className="ml-auto text-[#0066cc]">点这里看报告名词术语的详细解释</a>
      </div>
    </section>
  )
}

/* ---------- shell ---------- */

function RestoreIcon() {
  return (
    <svg viewBox="0 0 10 10" className="h-[10px] w-[10px]" fill="none" stroke="#fff" strokeWidth="1.500" shapeRendering="crispEdges">
      <path d="M3 3V1h6v5H7M1 4h5v5H1z" />
    </svg>
  )
}

function AppLogo({ className }: { className?: string }) {
  return (
    <svg viewBox="0 0 20 20" className={className}>
      <rect width="20" height="20" fill="#e00000" />
      <rect x="2" y="2" width="16" height="16" fill="#fff" />
      <path d="M4 5l12-1-1 4-5 8H5l5-7H5z" fill="#e00000" />
    </svg>
  )
}

function SogouLogo({ className }: { className?: string }) {
  return (
    <svg viewBox="0 0 24 24" className={className}>
      <path d="M2 4L21 0l2 19-19 5z" fill="#f0501e" />
      <path d="M17 7C14 4 8 5 8 8.500S17 11 17 15s-7 5-10 2" fill="none" stroke="#fff" strokeWidth="3" />
    </svg>
  )
}

function Header() {
  return (
    <header className={clsx('text-xs text-[#e8e8e8]', MENU)}>
      <div className="flex h-[26px] items-center bg-[#0a0a0a] pl-[5px]">
        <AppLogo className="h-5 w-5" />
        <h1 className="ml-3">金字塔决策交易系统 - [100009612] - [美黄金]</h1>
        <div className="ml-auto flex items-center text-[#ddd] [&>button]:flex [&>button]:w-[38px] [&>button]:justify-center">
          <button aria-label="资讯"><Rss className="h-3 w-3" strokeWidth={2} /></button>
          <button aria-label="用户"><User className="h-4 w-4" strokeWidth={1.5} /></button>
          <button aria-label="文档"><FileText className="h-4 w-4" strokeWidth={1.5} /></button>
          <button aria-label="购物车"><ShoppingCart className="h-4 w-4" strokeWidth={1.5} /></button>
          <button aria-label="公式"><SquareFunction className="h-4 w-4" strokeWidth={2} /></button>
          <button aria-label="Python"><TbBrandPython className="h-4 w-4" /></button>
          <button aria-label="客服"><Headphones className="h-4 w-4" strokeWidth={1.5} /></button>
          <button aria-label="最小化"><span className="mt-[5px] h-[2px] w-[6px] bg-white" /></button>
          <button aria-label="还原"><RestoreIcon /></button>
        </div>
        <button aria-label="关闭" className="flex w-[34px] justify-center"><X className="h-[11px] w-[11px] text-white" strokeWidth={3} /></button>
      </div>
      <div className="flex h-[26px] items-center bg-[#24272b] pr-1 pl-1">
        <span className="mr-1 h-4 border-l-2 border-dotted border-[#666]" />
        <AppLogo className="h-[14px] w-[14px]" />
        <nav className="ml-3 flex gap-4">
          {menus.map((m) => (
            <button key={m}>{m}</button>
          ))}
        </nav>
        <div className="ml-auto flex items-center gap-2">
          <button aria-label="最小化图表" className="mt-[5px] h-[2px] w-[6px] bg-white" />
          <button aria-label="还原图表"><RestoreIcon /></button>
          <button aria-label="关闭图表"><X className="h-[11px] w-[11px] text-white" strokeWidth={3} /></button>
        </div>
      </div>
      <div className="flex h-7 bg-[#24272b] pb-[2px] pl-[2px]">
        <nav className="flex items-center rounded-md bg-[#1f2225] pl-[2px] whitespace-nowrap">
          <span className="h-[14px] border-l-2 border-dotted border-[#666]" />
          {boards.map((b, i) => (
            <button key={i} className={clsx('h-5 pr-[10px] pl-[9px]', i < boards.length - 1 && 'border-r border-[#45484b]')}>
              {b}
            </button>
          ))}
          <X className="mr-3 ml-[3px] h-[10px] w-[10px] text-black" strokeWidth={3} />
        </nav>
      </div>
    </header>
  )
}

function StatusBar() {
  return (
    <footer className="relative flex h-[25px] items-center border-t-2 border-[#4c5357] bg-[#1f2326] pl-2 text-[15px] whitespace-nowrap">
      {quotes.map(([name, value, amount], i) => (
        <div key={name} className={clsx('flex gap-[6px] text-white', i < 3 ? 'w-[548px]' : 'flex-1')}>
          <span className={UI}>{name}</span>
          <span className={clsx('text-[#00ff00]', MONO)}>{value}</span>
          <span className={MONO}>{amount}</span>
        </div>
      ))}
      <span className={clsx('mr-3 text-xs text-[#e8e8e8]', UI)}>即时行情...</span>
      <div className={clsx('flex h-full items-center text-xs text-[#bbb] [&>button]:flex [&>button]:h-full [&>button]:w-[30px] [&>button]:items-center [&>button]:justify-center [&>button]:border-l [&>button]:border-[#45484b]', UI)}>
        <button aria-label="Python"><TbBrandPython className="h-4 w-4" /></button>
        <button aria-label="数据"><Cylinder className="h-4 w-4" strokeWidth={1.5} /></button>
        <button aria-label="目标"><Goal className="h-4 w-4" strokeWidth={1.5} /></button>
        <button aria-label="提醒"><Bell className="h-4 w-4" strokeWidth={1.5} /></button>
        <button aria-label="服务"><Gem className="h-[14px] w-[14px]" strokeWidth={1.5} /></button>
        <button aria-label="服务器"><Server className="h-[14px] w-[14px]" strokeWidth={1.5} /></button>
        <button aria-label="AI" className="text-[9px] font-bold"><span className="rounded-full border border-[#bbb] px-[3px] leading-[13px]">AI</span></button>
        <span className="flex h-full items-center border-l border-[#45484b] pr-[14px] pl-[2px] text-[#e8e8e8]">12:00:42</span>
      </div>
      <div className="absolute right-[351px] bottom-0 flex h-[22px] w-[206px] items-center gap-[5px] bg-white pl-[33px] text-[#1e78d0]">
        <SogouLogo className="absolute -top-1 -left-[2px] h-[27px] w-[27px]" />
        <b className={clsx('text-[15px]', UI)}>中</b>
        <b className="w-4 text-center">°,</b>
        <Smile className="h-[17px] w-[17px] shrink-0" />
        <Mic className="h-4 w-4 shrink-0" fill="#1e78d0" />
        <Keyboard className="h-[18px] w-[18px] shrink-0" />
        <User className="h-4 w-4 shrink-0 text-[#a8c4e0]" fill="#a8c4e0" />
        <Shirt className="h-[17px] w-[17px] shrink-0" fill="#1e78d0" />
        <svg viewBox="0 0 16 16" className="h-4 w-4 shrink-0" fill="#1e78d0">
          <path d="M1 1h6v6H1zM1 9h6v6H1zM9 9h6v6H9z" />
          <path d="M10 2h4v4h-4z" fill="none" stroke="#1e78d0" strokeWidth="2" />
        </svg>
      </div>
    </footer>
  )
}

const apps: { name: string; state?: 'open' | 'active'; art: ReactNode }[] = [
  {
    name: 'Edge',
    art: (
      <>
        <circle cx="12" cy="12" r="11.500" fill="#1273c4" />
        <path d="M1 11C2 4 7 .5 12 .5c7 0 11.500 5 11.500 9.500 0 4-3 5.500-6 5.500-2 0-4-.5-3-2 1.500-2 0-6-4-6S2 8 1 11z" fill="#35c0a8" />
        <path d="M1 11c2-5 8-5 9-3-4 2-4 9 1 12 3 2 7 1 9-1-2 4-6 5-9 4.500C5 23 0 18 1 11z" fill="#1a8ae0" />
      </>
    ),
  },
  {
    name: '文件资源管理器',
    art: (
      <>
        <path d="M1 3h8l2 3h12v16H1z" fill="#e8a820" />
        <path d="M1 8h22v14H1z" fill="#ffd65c" />
        <path d="M5 22v-7h14v7h-4v-3H9v3z" fill="#3c9be8" />
      </>
    ),
  },
  {
    name: '画图',
    state: 'open',
    art: (
      <>
        <path d="M2 14C1 7 9 3 15 5c5 2 7 7 4 10-2 2-4 0-5 2s1 5-4 5-7-3-8-8z" fill="#b8dcf0" />
        <circle cx="7" cy="11" r="2" fill="#e04030" />
        <circle cx="12" cy="8" r="2" fill="#f0b020" />
        <circle cx="6" cy="16" r="2" fill="#30a040" />
        <circle cx="11" cy="18" r="2" fill="#3060d0" />
        <path d="M23 1l-8 14-2 7 5-5 5-14z" fill="#c08040" />
      </>
    ),
  },
  {
    name: '同花顺',
    art: (
      <>
        <rect width="24" height="24" rx="4" fill="#d83a36" />
        <circle cx="12" cy="12" r="7" fill="#fff" />
        <path d="M14 6c-4 1-5 4-2 6s1 5-2 6" fill="none" stroke="#d83a36" strokeWidth="2" />
      </>
    ),
  },
  {
    name: '同花顺期货通',
    art: (
      <>
        <rect width="24" height="24" rx="4" fill="#e01018" />
        <circle cx="12" cy="12" r="9.500" fill="#fff" />
        <path d="M16 3c-7 1-8 6-4 9s1 7-4 9" fill="none" stroke="#e01018" strokeWidth="2.500" />
      </>
    ),
  },
  {
    name: 'Trade',
    art: (
      <>
        <circle cx="12" cy="12" r="11" fill="#3a7cd8" stroke="#c8dcf4" />
        <text x="12" y="15" textAnchor="middle" fontSize="8" fontWeight="700" fill="#fff">Trade</text>
      </>
    ),
  },
  {
    name: '文华财经 wh7',
    state: 'open',
    art: (
      <>
        <path d="M0 5h12v19H0z" fill="#b01820" />
        <path d="M12 0h12v22H12z" fill="#1a4c98" />
        <text x="0" y="17" fontSize="11" fontWeight="700" fill="#fff">wh</text>
        <text x="13" y="20" fontSize="22" fontStyle="italic" fill="#fff">7</text>
      </>
    ),
  },
  {
    name: '快期',
    art: (
      <>
        <rect width="24" height="24" rx="4" fill="#fff" />
        <path d="M0 18h24v2a4 4 0 0 1-4 4H4a4 4 0 0 1-4-4z" fill="#e0b060" />
        <path d="M9 4h9v9h-9z" fill="none" stroke="#f0a020" strokeWidth="3" />
        <path d="M7 7v8h8" fill="none" stroke="#1860b0" strokeWidth="3" />
      </>
    ),
  },
  {
    name: '博易大师',
    art: (
      <>
        <path d="M3 0h12l5 5-4 6 5 6-6 7H3z" fill="#d02c18" />
        <path d="M10 5h10M10 9h10M9 13h12M9 17h12" stroke="#601008" strokeWidth="1.500" />
      </>
    ),
  },
  {
    name: '行情',
    art: <path d="M1 23l7-12 3 3 4-8-3-1L23 1l-2 11-2-3-6 9-3-3z" fill="#e01828" />,
  },
  {
    name: '金字塔',
    state: 'active',
    art: (
      <>
        <path d="M0 0h24v24H0z" fill="#f00" />
        <path d="M3 3h18v18H3z" fill="#fff" />
        <path d="M6 5h13l-1 4-7 8H7l6-8H6z" fill="#f00" />
        <path d="M5 16l4 4M9 16l-4 4M13 19h6" stroke="#f00" strokeWidth="1.500" />
      </>
    ),
  },
  {
    name: '文华财经 wh6',
    art: (
      <>
        <path d="M0 5h12v19H0z" fill="#b01820" />
        <path d="M12 0h12v22H12z" fill="#1a4c98" />
        <text x="0" y="17" fontSize="11" fontWeight="700" fill="#fff">wh</text>
        <text x="13" y="20" fontSize="22" fontStyle="italic" fill="#fff">6</text>
      </>
    ),
  },
  {
    name: '极星',
    art: (
      <>
        <rect x="1" y="1" width="22" height="22" rx="5" fill="#0a1830" stroke="#1880f0" strokeWidth="1.500" />
        <path d="M11 18V7c0-4 7-4 7 0s-5 4-5 4M13 9v8c0 4-7 4-7 0s4-4 4-4" fill="none" stroke="#60d0f0" strokeWidth="2" />
      </>
    ),
  },
  {
    name: 'DA',
    art: (
      <>
        <rect width="24" height="24" rx="6" fill="#f8f8f8" />
        <text x="12" y="16" textAnchor="middle" fontSize="12" fontWeight="700" fill="#f0a818">DA</text>
      </>
    ),
  },
  {
    name: 'WPS',
    art: (
      <>
        <path d="M1 5h6l2 9 3-9h4l-5 16H7z" fill="#ff4a28" />
        <path d="M10 5h5l-1 4h5l1-4h3l-6 16h-4l1-7z" fill="#e02c18" />
      </>
    ),
  },
  {
    name: '中信期货',
    state: 'open',
    art: (
      <>
        <rect width="24" height="24" rx="4" fill="#fff" />
        <path d="M12 4h7v16l-7-8z" fill="#e02020" />
        <path d="M5 6h5v7l7 8L5 11z" fill="#e02020" />
      </>
    ),
  },
]

function Taskbar() {
  return (
    <div className={clsx('flex h-10 items-stretch bg-[#1c1c1c] text-[#f0f0f0]', UI)}>
      <button aria-label="开始" className="flex w-12 items-center justify-center">
        <svg viewBox="0 0 16 16" className="h-4 w-4" fill="#fff">
          <path d="M0 2l7-1v6.500H0zM8 1l8-1v7.500H8zM0 8.500h7V15l-7-1zM8 8.500h8V16l-8-1z" />
        </svg>
      </button>
      <label className="flex w-[288px] items-center border border-[#aaa] bg-[#f2f2f2] pl-[11px] text-[#333]">
        <svg viewBox="0 0 16 16" className="h-4 w-4" fill="none" stroke="#222" strokeWidth="1.500">
          <circle cx="10" cy="6" r="4.500" />
          <path d="M7 9.500L1 15" />
        </svg>
        <input aria-label="搜索" placeholder="搜索" className="ml-3 w-[170px] bg-transparent text-[15px] outline-none placeholder:text-[#333]" />
        <svg viewBox="0 0 66 38" className="h-[38px] w-[66px]">
          <path d="M10 24c8-4 14 2 20-1s14-4 15 4-8 10-18 10S8 32 10 24z" fill="#b8442c" />
          <path d="M12 22c6 10 20 12 32 8" fill="none" stroke="#7a2818" strokeWidth="2" />
          <path d="M24 2v26M30 6l-4 24M36 4l-8 26M18 8l4 20" stroke="#c89030" strokeWidth="1.500" />
          <path d="M34 8c8-10 24-4 22 8-2 10-10 6-10 18" fill="none" stroke="#d07060" strokeWidth="1.500" />
          <path d="M46 10l2 24M50 12l-1 20" stroke="#c89030" />
          <path d="M3 13V5l6-1v8M58 30v-8l4 3" fill="none" stroke="#604878" strokeWidth="1.500" />
          <circle cx="2" cy="13" r="2" fill="#604878" />
          <circle cx="8" cy="12" r="2" fill="#604878" />
          <circle cx="57" cy="30" r="2" fill="#604878" />
        </svg>
      </label>
      <button aria-label="任务视图" className="flex w-[49px] items-center justify-center">
        <svg viewBox="0 0 16 16" className="h-4 w-4" fill="none" stroke="#fff" shapeRendering="crispEdges">
          <path d="M1 0v3h9V0M1 16v-3h9v3M1 5h9v6H1zM14 0v5M14 7v9" />
        </svg>
      </button>
      <div className="ml-[2px] flex gap-px">
        {apps.map(({ name, state, art }) => (
          <button
            key={name}
            aria-label={name}
            className={clsx('flex w-12 flex-col items-center justify-end', state === 'active' && 'bg-[#4a4a4a]')}
          >
            <svg viewBox="0 0 24 24" className="mb-[6px] h-6 w-6 font-['Liberation_Sans',sans-serif]">
              {art}
            </svg>
            <span className={clsx('h-[2px]', state === 'active' && 'w-full bg-[#76b9ed]', state === 'open' && 'w-10 bg-[#76b9ed]')} />
          </button>
        ))}
      </div>
      <div className="ml-auto flex items-center gap-2 text-xs">
        <ChevronUp className="h-4 w-4" strokeWidth={2} />
        <svg viewBox="0 0 16 12" className="h-3 w-4">
          <path d="M3 11a3 3 0 0 1 0-6 5 5 0 0 1 9-1 4 4 0 0 1 1 7z" fill="#e8e8e8" />
        </svg>
        <svg viewBox="0 0 16 16" className="h-4 w-4" fill="none" stroke="#f0f0f0" shapeRendering="crispEdges">
          <path d="M4 2h11v9H4M9 11v3M5 14h8M1 1h4v5H1zM3 6v9" />
        </svg>
        <Volume2 className="h-4 w-4" strokeWidth={1.5} />
        <span className="mx-1 text-[13px]">中</span>
        <SogouLogo className="mx-1 h-4 w-4" />
        <div className="ml-1 w-[68px] text-center leading-[19px] whitespace-nowrap">
          12:00
          <br />
          2025-03-10
        </div>
        <svg viewBox="0 0 16 16" className="mr-3 ml-2 h-4 w-4">
          <path d="M0 0h16v13h-5l-3 3v-3H0z" fill="#fff" />
          <path d="M3 4h10M3 7h10M3 10h6" stroke="#222" />
        </svg>
        <span className="mr-1 h-full border-l border-[#666]" />
      </div>
    </div>
  )
}

export default function App() {
  return (
    <div className="relative flex h-screen flex-col overflow-hidden bg-black">
      <Header />
      <main className="flex min-h-0 flex-1 border-r-[3px] border-l-2 border-[#24272b] bg-black">
        <div className="flex min-w-0 flex-[1381] flex-col border-r border-[#c00000]">
          <CandlePanel />
          <TimeRow>
            <div className="w-3 shrink-0" />
            <div className="flex-[829] border-l border-[#c00000]">03/10</div>
            <div className="flex-[448] border-l border-[#c00000]">
              <span className="inline-block border-r border-[#c00000] bg-[#000080] px-px text-white">13:08:38(09:08)</span>
            </div>
            <div className="flex-[35] border-l border-[#c00000]" />
            <div className="w-14 pl-[17px]">1秒</div>
          </TimeRow>
          <IndicatorPanel />
          <VolumePanel />
        </div>
        <RightCharts />
      </main>
      <StatusBar />
      <Taskbar />
      <SettingsDialog />
      <ReportDialog />
    </div>
  )
}
